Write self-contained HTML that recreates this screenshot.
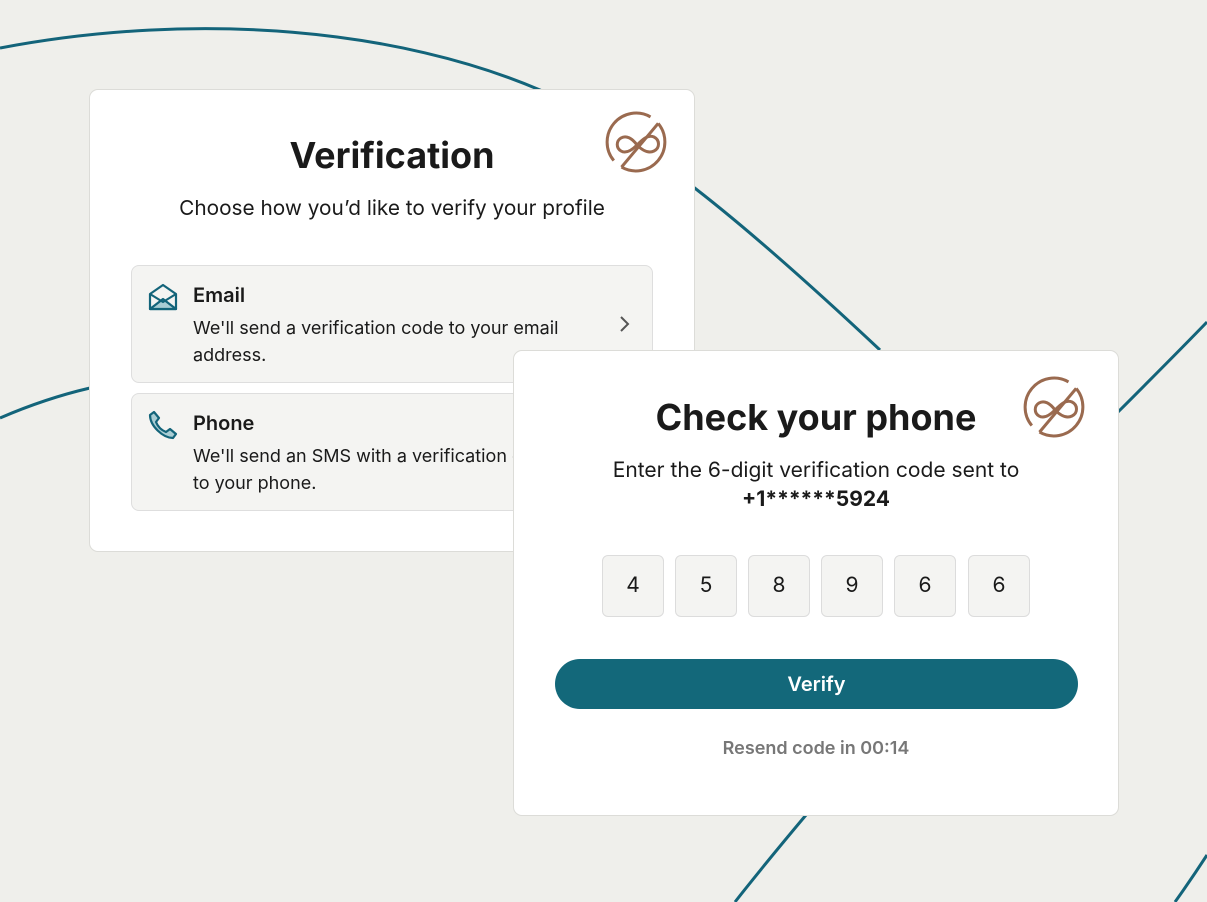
<!DOCTYPE html>
<html><head><meta charset="utf-8"><style>
*{box-sizing:border-box;margin:0;padding:0}
body{width:1207px;height:902px;background:#efefeb;position:relative;overflow:hidden;font-family:"Inter","Liberation Sans",sans-serif;color:#1a1a1a}
.card{position:absolute;background:#fff;border:1px solid #dcdcd8;border-radius:9px}
.opt{position:absolute;left:41px;width:522px;background:#f4f4f2;border:1px solid #dedede;border-radius:8px}
.opt h3{position:absolute;left:61px;top:17px;font-size:20px;font-weight:600}
.opt p{position:absolute;left:61px;top:49px;font-size:18px;line-height:27px;width:375px}
.box{position:absolute;top:204px;width:62px;height:62px;background:#f4f4f2;border:1px solid #dcdcdc;border-radius:6px;font-size:21px;text-align:center;line-height:60px}
</style></head><body>
<svg width="1207" height="902" style="position:absolute;left:0;top:0">
<g fill="none" stroke="#13647a" stroke-width="3">
<path d="M0,48 C200,10 400,30 540,90 C640,140 720,200 880,350"/>
<path d="M0,418 C30,405 60,395 90,388"/>
<path d="M1118,412 C1150,380 1180,350 1207,322"/>
<path d="M735,902 C760,870 785,840 806,815"/>
<path d="M1175,902 C1185,888 1196,872 1207,855"/>
</g></svg>

<div class="card" style="left:89px;top:89px;width:606px;height:463px">
<svg width="64" height="64" viewBox="0 0 64 64" style="position:absolute;left:514px;top:20px" fill="none" stroke="#9a6a4f" stroke-width="3">
<path d="M54.2,13.4 A29,29 0 0 1 17.5,57.1"/>
<path d="M9.8,50.6 A29,29 0 0 1 46.5,6.9"/>
<path d="M54.2,13.4 L17.5,57.1"/>
<path d="M33,35 C28,28 22,25 17,28 C12,31 12,38 17,41 C22,44 28,40 33,35 C38,30 44,24 50,27 C56,30 56,38 50,41 C44,44 38,40 33,35"/>
</svg>
<div style="position:absolute;left:0;width:100%;top:43px;text-align:center;font-size:36px;font-weight:700">Verification</div>
<div style="position:absolute;left:0;width:100%;top:106px;text-align:center;font-size:20.8px">Choose how you’d like to verify your profile</div>
<div class="opt" style="top:175px;height:118px">
<svg width="32" height="30" viewBox="0 0 32 30" style="position:absolute;left:15px;top:16px" fill="none" stroke="#13647a" stroke-width="2.2" stroke-linejoin="round">
<path d="M3,12 L16,3 L29,12 L29,27 L3,27 Z"/><path d="M3,27 L16,17 L29,27 Z" fill="#a9cdd4"/><path d="M3,12 L16,20 L29,12"/></svg>
<h3>Email</h3><p>We'll send a verification code to your email address.</p>
<svg width="14" height="20" style="position:absolute;left:486px;top:48px" fill="none" stroke="#555" stroke-width="2"><path d="M3,3 L10,10 L3,17"/></svg>
</div>
<div class="opt" style="top:303px;height:118px">
<svg width="30" height="30" viewBox="0 0 30 30" style="position:absolute;left:16px;top:16px" fill="#a9cdd4" stroke="#13647a" stroke-width="2.2" stroke-linejoin="round">
<path d="M6,2 L11,8 L8,12 C10,17 13,20 18,22 L22,19 L28,24 L25,28 C15,28 2,16 2,5 Z"/></svg>
<h3>Phone</h3><p>We'll send an SMS with a verification code to your phone.</p>
</div>
</div>

<div class="card" style="left:513px;top:350px;width:606px;height:466px">
<svg width="64" height="64" viewBox="0 0 64 64" style="position:absolute;left:508px;top:24px" fill="none" stroke="#9a6a4f" stroke-width="3">
<path d="M54.2,13.4 A29,29 0 0 1 17.5,57.1"/>
<path d="M9.8,50.6 A29,29 0 0 1 46.5,6.9"/>
<path d="M54.2,13.4 L17.5,57.1"/>
<path d="M33,35 C28,28 22,25 17,28 C12,31 12,38 17,41 C22,44 28,40 33,35 C38,30 44,24 50,27 C56,30 56,38 50,41 C44,44 38,40 33,35"/>
</svg>
<div style="position:absolute;left:0;width:100%;top:44px;text-align:center;font-size:36px;font-weight:700">Check your phone</div>
<div style="position:absolute;left:0;width:100%;top:105px;text-align:center;font-size:21px;line-height:29px">Enter the 6-digit verification code sent to<br><b>+1******5924</b></div>
<div class="box" style="left:88px">4</div><div class="box" style="left:161px">5</div><div class="box" style="left:234px">8</div>
<div class="box" style="left:307px">9</div><div class="box" style="left:380px">6</div><div class="box" style="left:454px">6</div>
<div style="position:absolute;left:41px;top:308px;width:523px;height:50px;border-radius:25px;background:#13687a;color:#fff;text-align:center;line-height:50px;font-size:20px;font-weight:600">Verify</div>
<div style="position:absolute;left:0;width:100%;top:387px;text-align:center;font-size:18px;font-weight:600;color:#777">Resend code in 00:14</div>
</div>
</body></html>
